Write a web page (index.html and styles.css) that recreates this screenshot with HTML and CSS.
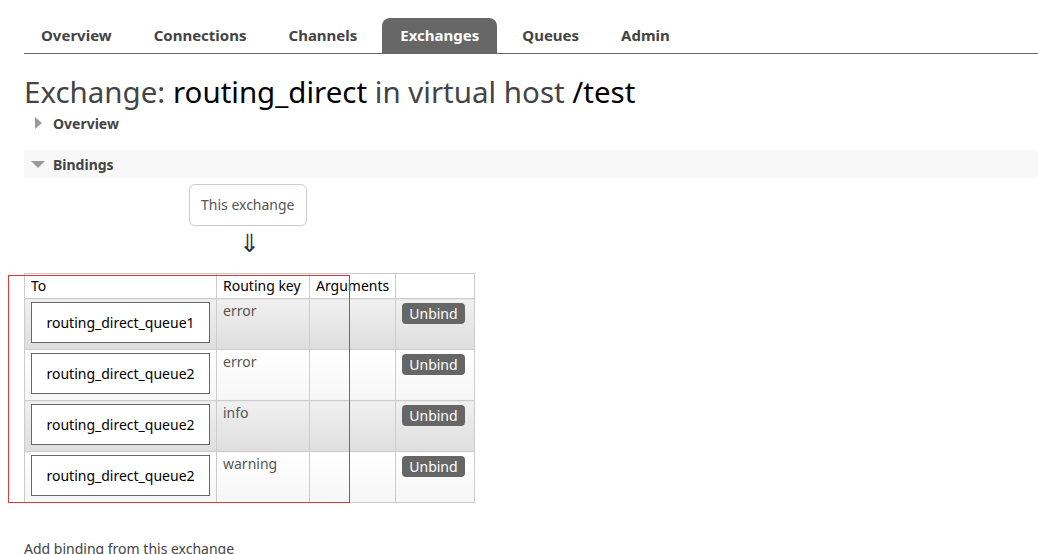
FILE: index.html
```html
<!DOCTYPE html>
<html>
<head>
<meta charset="utf-8">
<link rel="stylesheet" href="styles.css">
</head>
<body>
<div class="page">
  <ul class="nav">
    <li class="tab">Overview</li>
    <li class="tab">Connections</li>
    <li class="tab">Channels</li>
    <li class="tab active">Exchanges</li>
    <li class="tab">Queues</li>
    <li class="tab">Admin</li>
  </ul>
  <h1 class="title">Exchange: <b>routing_direct</b> in virtual host <b>/test</b></h1>
  <div class="section closed"><span class="tri-right"></span>Overview</div>
  <div class="section open"><span class="tri-down"></span>Bindings</div>
  <div class="diagram">
    <div class="this-ex">This exchange</div>
    <div class="arrow">&#8659;</div>
  </div>
  <div class="table-wrap">
    <table class="bindings">
      <thead>
        <tr><th class="c-to">To</th><th class="c-rk">Routing key</th><th class="c-arg">Arguments</th><th class="c-btn"></th></tr>
      </thead>
      <tbody>
        <tr class="alt1"><td><div class="queue">routing_direct_queue1</div></td><td class="rk">error</td><td></td><td><span class="btn">Unbind</span></td></tr>
        <tr class="alt0"><td><div class="queue">routing_direct_queue2</div></td><td class="rk">error</td><td></td><td><span class="btn">Unbind</span></td></tr>
        <tr class="alt1"><td><div class="queue">routing_direct_queue2</div></td><td class="rk">info</td><td></td><td><span class="btn">Unbind</span></td></tr>
        <tr class="alt0"><td><div class="queue">routing_direct_queue2</div></td><td class="rk">warning</td><td></td><td><span class="btn">Unbind</span></td></tr>
      </tbody>
    </table>
    <div class="highlight"></div>
  </div>
  <div class="add">Add binding from this exchange</div>
</div>
</body>
</html>
```

FILE: styles.css
```css
* { box-sizing: border-box; }
html, body { margin: 0; padding: 0; background: #fff; }
body { font-family: "Noto Sans", "DejaVu Sans", sans-serif; font-size: 14px; color: #444; }
.page { padding: 18px 0 0 24px; }
.nav { list-style: none; margin: 0; padding: 0; display: flex; border-bottom: 1px solid #666; height: 36px; }
.tab { font-weight: bold; font-size: 15px; color: #444; padding: 0 17px; margin-right: 8px; line-height: 35px; border-radius: 8px 8px 0 0; }
.tab.active { background: #666; color: #fff; padding: 0 18px; }
.title { font-size: 29.5px; font-weight: normal; color: #444; margin: 18px 0 0 0; line-height: 40px; height: 37px; }
.title b { font-weight: normal; color: #000; }
.section { font-weight: bold; color: #444; display: flex; align-items: center; height: 28px; }
.section.closed { margin-top: 0; padding-left: 11px; }
.section.open { margin-top: 13px; background: #f8f8f8; padding-left: 7px; }
.tri-right { width: 0; height: 0; border-top: 6px solid transparent; border-bottom: 6px solid transparent; border-left: 7px solid #999; margin-right: 11px; }
.tri-down { width: 0; height: 0; border-left: 7px solid transparent; border-right: 7px solid transparent; border-top: 7px solid #999; margin-right: 8px; }
.diagram { display: flex; flex-direction: column; align-items: flex-start; padding-left: 165px; margin-top: 6px; }
.this-ex { border: 1px solid #ccc; border-radius: 6px; padding: 0 11px; height: 42px; line-height: 40px; color: #555; }
.arrow { width: 121px; text-align: center; font-size: 25px; line-height: 26px; color: #333; margin-top: 3px; }
.table-wrap { position: relative; margin-top: 18px; width: 451px; }
.bindings { border-collapse: collapse; border: 1px solid #ccc; width: 451px; }
.bindings th, .bindings td { border: 1px solid #ccc; padding: 0 6px; vertical-align: top; }
.bindings th { font-weight: normal; color: #000; text-align: left; height: 25px; line-height: 24px; background: #fff; }
.c-to { width: 191px; }
.c-rk { width: 93px; }
.c-arg { width: 86px; }
.bindings td { height: 51px; padding-top: 3px; }
.rk { color: #555; line-height: 18px; }
tr.alt1 td { background: linear-gradient(#f0f0f0, #dedede); }
tr.alt0 td { background: linear-gradient(#ffffff, #f6f6f6); }
.queue { width: 179px; height: 41px; border: 1px solid #666; background: #fff; color: #000; text-align: center; line-height: 39px; }
.btn { display: inline-block; background: #666; color: #fff; border-radius: 4px; padding: 0 7px; height: 21px; line-height: 21px; margin-top: 1px; }
.highlight { position: absolute; left: -16px; top: 2px; width: 342px; height: 228px; border: 1px solid #e53935; pointer-events: none; }
.add { margin-top: 36px; color: #444; }
```
